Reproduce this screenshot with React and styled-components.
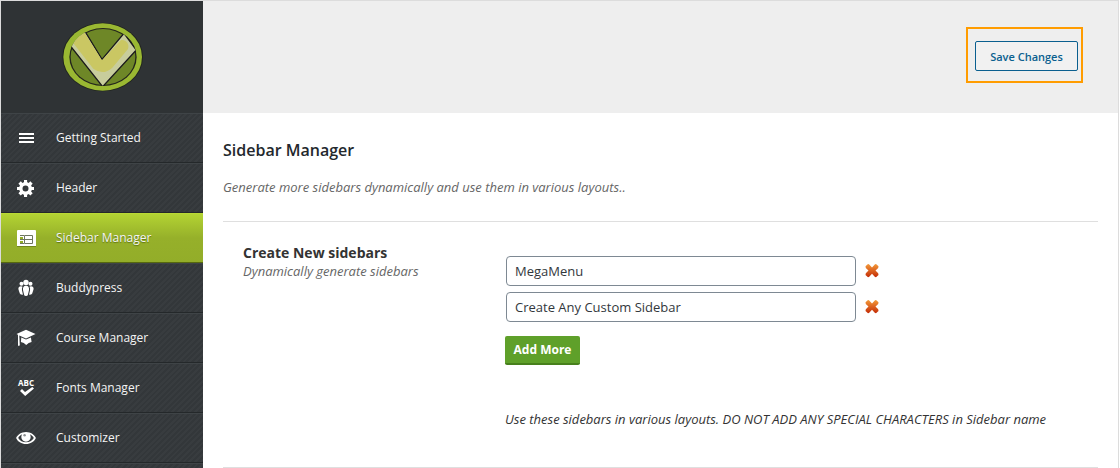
import { useState } from "react";
import styled, { createGlobalStyle, css } from "styled-components";

const menu = [
  { label: "Getting Started", icon: MenuIcon },
  { label: "Header", icon: GearIcon },
  { label: "Sidebar Manager", icon: LayoutIcon },
  { label: "Buddypress", icon: GroupsIcon },
  { label: "Course Manager", icon: CapIcon },
  { label: "Fonts Manager", icon: SpellIcon },
  { label: "Customizer", icon: EyeIcon },
  { label: "", icon: null },
];

export default function App() {
  const [active, setActive] = useState("Sidebar Manager");
  const [sidebars, setSidebars] = useState([
    "MegaMenu",
    "Create Any Custom Sidebar",
  ]);

  const update = (index, value) =>
    setSidebars(sidebars.map((name, i) => (i === index ? value : name)));
  const remove = (index) => setSidebars(sidebars.filter((_, i) => i !== index));

  return (
    <>
      <GlobalStyle />
      <Panel>
        <Sidebar>
          <LogoArea>
            <Logo />
          </LogoArea>
          <nav>
            <MenuList>
              {menu.map(({ label, icon: ItemIcon }) => (
                <MenuItem key={label} $active={label === active}>
                  {ItemIcon && (
                    <MenuLink href="#" onClick={() => setActive(label)}>
                      <ItemIcon />
                      {label}
                    </MenuLink>
                  )}
                </MenuItem>
              ))}
            </MenuList>
          </nav>
        </Sidebar>

        <Main>
          <TopBar>
            <Highlight>
              <SaveButton type="button">Save Changes</SaveButton>
            </Highlight>
          </TopBar>

          <Content>
            <Title>Sidebar Manager</Title>
            <Intro>
              Generate more sidebars dynamically and use them in various
              layouts..
            </Intro>

            <Option>
              <OptionInfo>
                <OptionTitle id="sidebars-title">Create New sidebars</OptionTitle>
                <OptionText>Dynamically generate sidebars</OptionText>
              </OptionInfo>
              <Fields>
                {sidebars.map((name, i) => (
                  <FieldRow key={i}>
                    <TextInput
                      type="text"
                      aria-labelledby="sidebars-title"
                      value={name}
                      onChange={(e) => update(i, e.target.value)}
                    />
                    <RemoveButton
                      type="button"
                      aria-label="Remove"
                      onClick={() => remove(i)}
                    >
                      <CrossIcon />
                    </RemoveButton>
                  </FieldRow>
                ))}
                <AddButton
                  type="button"
                  onClick={() => setSidebars([...sidebars, ""])}
                >
                  Add More
                </AddButton>
                <Note>
                  Use these sidebars in various layouts. DO NOT ADD ANY SPECIAL
                  CHARACTERS in Sidebar name
                </Note>
              </Fields>
            </Option>
          </Content>
        </Main>
      </Panel>
    </>
  );
}

function Logo() {
  return (
    <svg width="82" height="70" viewBox="182 66 246 210" aria-hidden="true">
      <defs>
        <clipPath id="disc">
          <ellipse cx="308" cy="171" rx="101" ry="87" />
        </clipPath>
      </defs>
      <ellipse cx="307" cy="171" rx="121" ry="103" fill="#20251f" />
      <ellipse cx="307" cy="171" rx="118" ry="101" fill="#9ab832" />
      <ellipse cx="308" cy="171" rx="101" ry="87" fill="#24261c" />
      <ellipse cx="308" cy="171" rx="97" ry="84" fill="#6e8727" />
      <g clipPath="url(#disc)">
        <path
          d="M254 94L305 178L371 100L408 150L307 260L209 136L225 108Z"
          fill="#c8cd9c"
          stroke="#1b1a1c"
          strokeWidth="4"
        />
        <path
          d="M253 98L305 181L362 120C378 118 388 132 383 147L336 203Q308 228 279 206L219 130L235 104Z"
          fill="#cac763"
        />
      </g>
    </svg>
  );
}

function MenuIcon() {
  return (
    <Icon viewBox="0 0 20 20">
      <path d="M3 5h15v2H3zM3 9h15v2H3zM3 13h15v2H3z" />
    </Icon>
  );
}

function GearIcon() {
  return (
    <Icon viewBox="0 0 20 20">
      <path
        fillRule="evenodd"
        d="M18 12h-2.200c-.2.6-.4 1.100-.7 1.600l1.600 1.600-2.400 2.400-1.600-1.600c-.5.3-1 .5-1.600.7V19H8v-2.300c-.6-.2-1.100-.4-1.600-.7l-1.600 1.600-2.400-2.400L4 13.600c-.3-.5-.5-1-.7-1.600H1V8.900h2.300c.2-.6.4-1.100.7-1.600L2.400 5.700l2.400-2.400 1.600 1.600c.5-.3 1-.5 1.600-.7V2h3.100v2.200c.6.2 1.100.4 1.600.7l1.600-1.600 2.400 2.400-1.600 1.600c.3.5.5 1 .7 1.600H18zM9.500 13.500a3 3 0 1 0 0-6 3 3 0 0 0 0 6z"
      />
    </Icon>
  );
}

function LayoutIcon() {
  return (
    <Icon viewBox="0 0 20 20">
      <path d="M2 2h17q1 0 1 1v15H1V3q0-1 1-1z" />
      <path
        d="M8.500 7.500h8v8h-8zM8.500 11.500h8M4 7.500h4M4 11.500h4M4 15.500h4"
        fill="none"
        stroke="#6d7560"
      />
      <path d="M4 9h3v2H4zM4 13h3v2H4z" fill="#93ad29" />
    </Icon>
  );
}

function GroupsIcon() {
  return (
    <Icon viewBox="0 0 20 20">
      <circle cx="10" cy="4.500" r="2.700" />
      <circle cx="5.500" cy="5.700" r="2" />
      <circle cx="14.500" cy="5.700" r="2" />
      <path d="M10 7.800c2.500 0 3.300 1.800 3 4.300l-1.100 4.600q-.2 1.300-1.900 1.300t-1.900-1.300L7 12.100c-.3-2.500.5-4.300 3-4.300z" />
      <path d="M5 8.200q1.100 0 1.500.5-.9 1.500-.5 3.900l1 4.200q-2.700-.1-3.200-1.300l-1.300-4C2 9.500 3 8.200 5 8.200zM15 8.200q-1.100 0-1.500.5.900 1.500.5 3.900l-1 4.200q2.700-.1 3.200-1.300l1.300-4C18 9.500 17 8.200 15 8.200z" />
    </Icon>
  );
}

function CapIcon() {
  return (
    <Icon viewBox="0 0 20 20">
      <path d="M10 1.800L.500 6l1.500.8V18H1l2.800-.4L3.300 7.500 10 10.500 19.500 6z" />
      <path d="M5.300 9.400l4.700 2.200 4.900-2.200.7 4.600q-3 .3-5.400 3-2.200-2.700-5.300-3z" />
    </Icon>
  );
}

function SpellIcon() {
  return (
    <Icon viewBox="0 0 20 20">
      <AbcText x="2" y="8">
        ABC
      </AbcText>
      <path d="M4 13l2-2 3 3 7.300-5L18 10.600 9.200 18z" />
    </Icon>
  );
}

function EyeIcon() {
  return (
    <Icon viewBox="0 0 20 20">
      <path
        fillRule="evenodd"
        d="M10 4c4.800 0 8.500 2.800 9.900 6-1.600 3.500-5.300 6-9.900 6S1.600 13.500.1 10C1.600 6.800 5.200 4 10 4zM6.200 6.300C4.200 7.200 2.900 8.500 2.200 10c1.500 2.700 4.400 4.300 7.800 4.300s6.300-1.600 7.800-4.300c-.7-1.500-2-2.800-4-3.700q.9 1.200.9 2.700a4.700 4.700 0 1 1-9.400 0q0-1.500.9-2.700z"
      />
      <circle cx="10" cy="9" r="3.900" />
      <circle cx="8.600" cy="7.300" r="1.200" fill="#8d9092" />
    </Icon>
  );
}

function CrossIcon() {
  return (
    <svg width="14" height="14" viewBox="0 0 14 14" aria-hidden="true">
      <defs>
        <linearGradient id="cross" x1="0" y1="0" x2="0" y2="1">
          <stop offset="0" stopColor="#f39a3a" />
          <stop offset="1" stopColor="#c42c06" />
        </linearGradient>
      </defs>
      <path
        d="M3 0Q4 0 4.700 1L7 3.500 9.300 1Q10 0 11 0L13.500 2.300 13.200 4 10.500 6.500 13.200 9.300 13.500 11 11 13.200Q10 13.200 9.300 12.200L7 9.700 4.700 12.200Q4 13.200 3 13.200L.5 11 .8 9.300 3.500 6.500 .8 4 .5 2.300Z"
        fill="url(#cross)"
      />
    </svg>
  );
}

const GlobalStyle = createGlobalStyle`
  *, *::before, *::after {
    box-sizing: border-box;
  }

  body {
    margin: 0;
    background: #fff;
    color: #333;
    font-family: "Open Sans", "Noto Sans", sans-serif;
    font-size: 13px;
    line-height: 18px;
  }

  h1, h2, p, ul {
    margin: 0;
    padding: 0;
  }
`;

const Panel = styled.div`
  display: flex;
  min-height: 100vh;
  max-height: 100vh;
  margin-right: 1px;
  border: 1px solid #dcdcdc;
  border-bottom: 0;
  overflow: hidden;
`;

const Sidebar = styled.aside`
  flex: 0 0 202px;
  background: #2f3335;
`;

const LogoArea = styled.div`
  display: flex;
  justify-content: center;
  align-items: center;
  height: 112px;
`;

const MenuList = styled.ul`
  list-style: none;
`;

const MenuItem = styled.li`
  height: 50px;
  border-top: 1px solid #3f4447;
  border-bottom: 1px solid #24282a;
  background: repeating-linear-gradient(
    135deg,
    #33373a 0 2px,
    #383c3f 2px 4px
  );

  ${({ $active }) =>
    $active &&
    css`
      border-top-color: #b9d935;
      border-bottom-color: #56680f;
      background: linear-gradient(#b3d333, #96b02a 50%, #93ad29);
      text-shadow: 0 1px 1px #5f7411;

      svg {
        filter: drop-shadow(0 1px 0 #71851f);
      }
    `}
`;

const MenuLink = styled.a`
  display: flex;
  align-items: center;
  gap: 20px;
  height: 100%;
  padding-left: 15px;
  color: #f4f4f4;
  font-size: 12px;
  text-decoration: none;
`;

const Icon = styled.svg.attrs({ "aria-hidden": true })`
  width: 20px;
  height: 20px;
  fill: #fff;
`;

const AbcText = styled.text`
  font-family: "Open Sans", sans-serif;
  font-size: 8px;
  font-weight: 700;
`;

const Main = styled.main`
  flex: 1;
  min-width: 0;
`;

const TopBar = styled.header`
  display: flex;
  justify-content: flex-end;
  align-items: flex-start;
  height: 112px;
  padding: 26px 35px 0;
  background: #eee;
`;

const Highlight = styled.div`
  padding: 12px 3px 10px 7px;
  border: 2px solid #ff9c00;
`;

const SaveButton = styled.button`
  display: block;
  width: 103px;
  height: 30px;
  padding: 0;
  border: 1px solid #0a5f8f;
  border-radius: 2px;
  background: #f1f1f1;
  color: #0a5f8f;
  font: 600 11px "Open Sans", sans-serif;
`;

const Content = styled.div`
  padding: 25px 20px 0;
`;

const Title = styled.h1`
  color: #23282d;
  font-size: 16px;
  font-weight: 600;
  line-height: 24px;
`;

const Intro = styled.p`
  margin: 16px 0 25px;
  color: #666;
  font-size: 13px;
  font-style: italic;
`;

const Option = styled.section`
  display: flex;
  padding: 22px 0 39px 20px;
  border-top: 1px solid #dfdfdf;
  border-bottom: 1px solid #dfdfdf;
`;

const OptionInfo = styled.div`
  flex: 0 0 262px;
`;

const OptionTitle = styled.h2`
  font-size: 14px;
  font-weight: 700;
  line-height: 18px;
`;

const OptionText = styled.p`
  color: #666;
  font-size: 13px;
  font-style: italic;
`;

const Fields = styled.div`
  flex: 1;
  min-width: 0;
  padding-top: 12px;
`;

const FieldRow = styled.div`
  display: flex;
  align-items: center;
  gap: 9px;
  margin: 0 0 6px 1px;
`;

const TextInput = styled.input`
  width: 350px;
  height: 30px;
  padding: 0 8px;
  border: 1px solid #7e8993;
  border-radius: 4px;
  background: #fff;
  color: #32373c;
  font: 13px "Open Sans", sans-serif;
`;

const RemoveButton = styled.button`
  display: flex;
  padding: 0;
  border: 0;
  background: none;
  cursor: pointer;
`;

const AddButton = styled.button`
  display: block;
  width: 75px;
  height: 29px;
  margin-top: 14px;
  padding: 0;
  border: 0;
  border-bottom: 2px solid #47801c;
  border-radius: 2px;
  background: #5fa02a;
  color: #fff;
  font: 700 12px "Open Sans", sans-serif;
`;

const Note = styled.p`
  margin-top: 45px;
  font-size: 13px;
  font-style: italic;
`;
